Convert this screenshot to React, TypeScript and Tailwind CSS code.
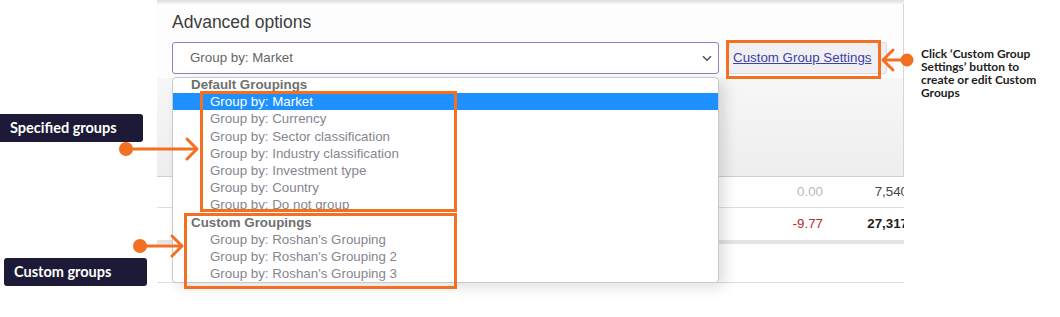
const defaultGroups = [
  "Market",
  "Currency",
  "Sector classification",
  "Industry classification",
  "Investment type",
  "Country",
  "Do not group",
];

const customGroups = ["Roshan's Grouping", "Roshan's Grouping 2", "Roshan's Grouping 3"];

function GroupHeader({ label }: { label: string }) {
  return (
    <div className="h-[17.2px] pl-[18px] text-[13.33px] font-bold leading-[17.2px] text-[#6f6f6f]">
      {label}
    </div>
  );
}

function GroupOption({ label, selected }: { label: string; selected?: boolean }) {
  return (
    <div
      className={
        selected
          ? "h-[17.2px] bg-[#1e90ff] pl-[37px] text-[13.33px] leading-[17.2px] text-white"
          : "h-[17.2px] pl-[37px] text-[13.33px] leading-[17.2px] text-[#86868f]"
      }
    >
      Group by: {label}
    </div>
  );
}

export default function App() {
  return (
    <div className="relative h-[317px] w-[1060px] overflow-hidden bg-white font-['Liberation_Sans',Arial,sans-serif]">
      {/* Screenshot panel */}
      <div className="ml-[157px] flex h-[284px] w-[747px] flex-col overflow-hidden bg-white">
        <div className="h-[4px] bg-gradient-to-b from-[#dcdcdc] to-[#f6f6f6]" />

        <div className="flex flex-col border-r border-[#d6d6d6] bg-[#fdfdfd] px-[15px] pb-[4px]">
          <h2 className="mt-[8px] text-[17.5px] leading-[20px] text-[#3d3d3d]">Advanced options</h2>
          <div className="mt-[10px] flex items-center gap-[8px]">
            <div className="flex h-[32px] w-[547px] shrink-0 items-center justify-between rounded-[3px] border border-[#8686cc] bg-white pl-[17px] pr-[6px] text-[13.33px] text-[#666]">
              <span>Group by: Market</span>
              <svg width="10" height="7" viewBox="0 0 10 7" fill="none">
                <path d="M1 1.2 L5 5.2 L9 1.2" stroke="#555" strokeWidth="1.6" />
              </svg>
            </div>
            <div className="flex h-[32px] w-[160px] shrink-0 items-center rounded-[3px] border border-[#dadade] bg-[#f0f0f3] pl-[5px] text-[13.33px] text-[#4040a8] underline">
              Custom Group Settings
            </div>
          </div>
        </div>

        {/* Lower grey block */}
        <div className="h-[99px] border-b border-r border-b-[#cfcfcf] border-r-[#d6d6d6] bg-gradient-to-b from-[#f7f7f7] to-[#eeeeee]" />

        {/* Table rows */}
        <div className="flex h-[31px] items-center border-b border-[#dedede] text-[13.33px]">
          <div className="w-[666px] shrink-0 text-right text-[#b9b9b9]">0.00</div>
          <div className="w-[85px] shrink-0 text-right text-[#444]">7,540</div>
        </div>
        <div className="flex h-[32px] items-center text-[13.33px]">
          <div className="w-[666px] shrink-0 text-right text-[#c1272d]">-9.77</div>
          <div className="w-[85px] shrink-0 text-right font-bold text-[#1e1e1e]">27,317</div>
        </div>
        <div className="h-[4px] bg-[#e4e4e4]" />
        <div className="h-[39px] border-b border-[#dcdcdc] bg-white" />
      </div>

      {/* Open dropdown list */}
      <div className="absolute left-[172px] top-[77px] h-[206px] w-[547px] overflow-hidden rounded-[4px] border border-[#c9c9c9] bg-white shadow-[6px_4px_14px_rgba(0,0,0,0.13)]">
        <div className="-mt-[2px]">
          <GroupHeader label="Default Groupings" />
          {defaultGroups.map((g, i) => (
            <GroupOption key={g} label={g} selected={i === 0} />
          ))}
          <GroupHeader label="Custom Groupings" />
          {customGroups.map((g) => (
            <GroupOption key={g} label={g} />
          ))}
        </div>
      </div>

      {/* Highlight boxes */}
      <div className="absolute left-[200px] top-[91px] h-[121px] w-[257px] border-[3px] border-[#f36f21]" />
      <div className="absolute left-[184px] top-[213px] h-[76px] w-[273px] border-[3px] border-[#f36f21]" />
      <div className="absolute left-[726px] top-[40px] h-[39px] w-[155px] border-[3px] border-[#f36f21]" />

      {/* Arrows */}
      <svg className="pointer-events-none absolute left-0 top-0" width="1060" height="317" viewBox="0 0 1060 317" fill="none">
        <g stroke="#f36f21" strokeWidth="3" strokeLinecap="round" strokeLinejoin="round">
          <path d="M126 149 H196" />
          <path d="M187 139 L197 149 L187 159" />
          <path d="M140 246 H181" />
          <path d="M172 236 L182 246 L172 256" />
          <path d="M907 60 H885" />
          <path d="M893 50 L883 60 L893 70" />
        </g>
        <g fill="#f36f21">
          <circle cx="126" cy="149" r="7" />
          <circle cx="140" cy="246" r="7" />
          <circle cx="907" cy="60" r="6.5" />
        </g>
      </svg>

      {/* Labels */}
      <div className="absolute left-0 top-[114px] flex h-[28px] w-[143px] items-center rounded-r-[3px] bg-[#1c1a36] pl-[10px] font-['Lato',sans-serif] text-[14.5px] font-bold text-white">
        Specified groups
      </div>
      <div className="absolute left-[4px] top-[258px] flex h-[28px] w-[143px] items-center rounded-[3px] bg-[#1c1a36] pl-[10px] font-['Lato',sans-serif] text-[14.5px] font-bold text-white">
        Custom groups
      </div>
      <div className="absolute left-[921px] top-[47px] w-[135px] font-['Lato',sans-serif] text-[12px] font-bold leading-[13px] text-[#1d1d1d]">
        Click ‘Custom Group
        <br />
        Settings’ button to
        <br />
        create or edit Custom
        <br />
        Groups
      </div>
    </div>
  );
}
